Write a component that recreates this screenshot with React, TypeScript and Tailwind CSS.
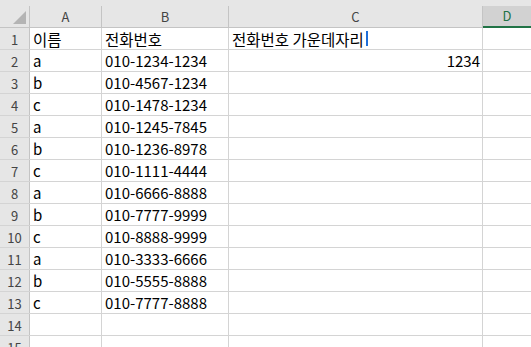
import React from "react";

const rows: [string, string, string][] = [
  ["이름", "전화번호", "전화번호 가운데자리"],
  ["a", "010-1234-1234", "1234"],
  ["b", "010-4567-1234", ""],
  ["c", "010-1478-1234", ""],
  ["a", "010-1245-7845", ""],
  ["b", "010-1236-8978", ""],
  ["c", "010-1111-4444", ""],
  ["a", "010-6666-8888", ""],
  ["b", "010-7777-9999", ""],
  ["c", "010-8888-9999", ""],
  ["a", "010-3333-6666", ""],
  ["b", "010-5555-8888", ""],
  ["c", "010-7777-8888", ""],
  ["", "", ""],
  ["", "", ""],
];

const font = { fontFamily: '"Noto Sans CJK KR", "Noto Sans", sans-serif' };

export default function App() {
  return (
    <div
      className="w-[531px] h-[347px] overflow-hidden bg-white text-[#000]"
      style={font}
    >
      {/* header row */}
      <div className="flex h-[28px] bg-[#e6e6e6] border-b border-[#c4c4c4]">
        <div className="relative w-[30px] shrink-0 mt-[6px] border-r border-[#c4c4c4]">
          <div className="absolute right-[3px] bottom-[3px] w-0 h-0 border-l-[13px] border-l-transparent border-b-[13px] border-b-[#b4b4b4]" />
        </div>
        <div className="w-[72px] shrink-0 mt-[6px] border-r border-[#c4c4c4] flex items-center justify-center text-[13px] text-[#444]">
          A
        </div>
        <div className="w-[127px] shrink-0 mt-[6px] border-r border-[#c4c4c4] flex items-center justify-center text-[13px] text-[#444]">
          B
        </div>
        <div className="w-[254px] shrink-0 mt-[6px] border-r border-[#c4c4c4] flex items-center justify-center text-[13px] text-[#444]">
          C
        </div>
        <div className="flex-1 mt-[6px] bg-[#d2d2d2] border-b-2 border-[#217346] -mb-px flex items-center justify-center text-[13px] text-[#217346]">
          D
        </div>
      </div>
      {rows.map((r, i) => (
        <div key={i} className="flex h-[22px] border-b border-[#d4d4d4]">
          <div className="w-[30px] shrink-0 bg-[#e6e6e6] border-r border-[#c4c4c4] flex items-center justify-center text-[13px] text-[#444] pt-[2px]">
            {i + 1}
          </div>
          <div
            className={`w-[72px] shrink-0 border-r border-[#d4d4d4] pl-[3px] flex items-end leading-[20px] whitespace-nowrap ${
              i === 0 ? "text-[15.5px]" : "text-[15px]"
            }`}
          >
            {r[0]}
          </div>
          <div
            className={`w-[127px] shrink-0 border-r border-[#d4d4d4] pl-[3px] flex items-end leading-[20px] whitespace-nowrap ${
              i === 0 ? "text-[15.5px]" : "text-[15px]"
            }`}
          >
            {r[1]}
          </div>
          <div
            className={`w-[254px] shrink-0 border-r border-[#d4d4d4] flex items-end leading-[20px] whitespace-nowrap ${
              i === 1 ? "justify-end pr-[2px] text-[15px]" : "pl-[3px] text-[15.5px]"
            }`}
          >
            {r[2]}
            {i === 0 && (
              <span className="inline-block w-[2px] h-[15px] bg-[#1e6fd9] ml-[2px] mb-[3px]" />
            )}
          </div>
          <div className="flex-1" />
        </div>
      ))}
    </div>
  );
}
